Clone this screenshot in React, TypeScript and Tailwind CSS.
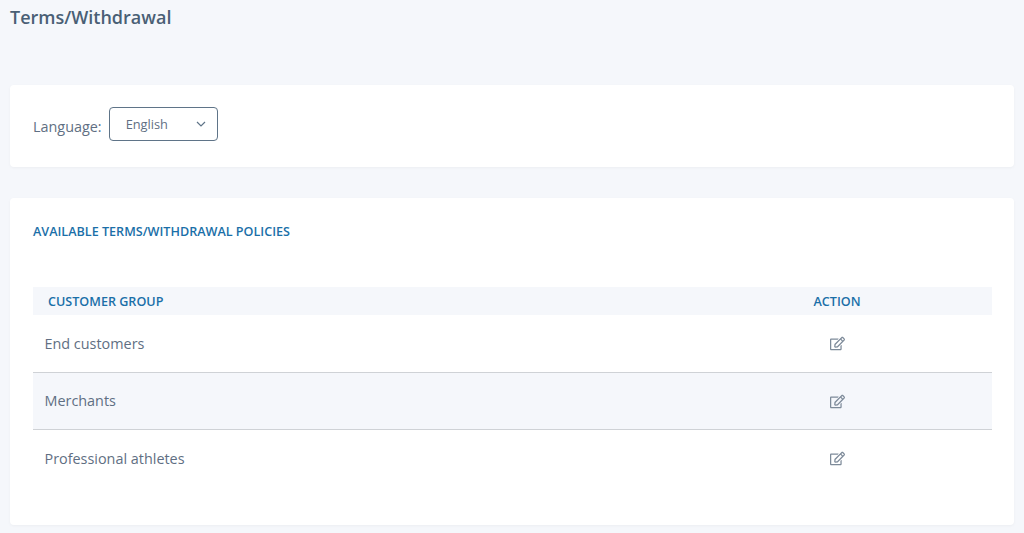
import { FaRegEdit } from "react-icons/fa";

const rows = [
  { name: "End customers", shaded: false },
  { name: "Merchants", shaded: true },
  { name: "Professional athletes", shaded: false },
];

export default function App() {
  return (
    <div className="h-[533px] overflow-hidden bg-[#f5f7fb] px-[10px] font-['Open_Sans','Noto_Sans',sans-serif] text-[#5f6f83]">
      <h1 className="h-[85px] pt-[5px] text-[18px] leading-[24px] font-semibold text-[#4a5f75]">Terms/Withdrawal</h1>

      <section className="flex h-[82px] items-start rounded-[4px] bg-white pl-[23px] pt-[22px] shadow-[0_1px_3px_rgba(0,0,0,0.04)]">
        <span className="mt-[10px] text-[14.4px] leading-[20px]">Language:</span>
        <div className="ml-[7px] flex h-[34px] w-[109px] items-center justify-between rounded-[4px] border border-[#5f7488] pl-[16px] pr-[11px] pt-[2px] text-[12.8px]">
          <span>English</span>
          <svg width="10" height="6" viewBox="0 0 10 6" fill="none" stroke="#5f7488" strokeWidth="1.2" className="mb-[2px]">
            <path d="M1 1l4 4 4-4" />
          </svg>
        </div>
      </section>

      <section className="mt-[31px] h-[327px] rounded-[4px] bg-white px-[23px] pt-[25px] shadow-[0_1px_3px_rgba(0,0,0,0.04)]">
        <h2 className="text-[12.6px] leading-[17px] font-semibold text-[#1a6fa8]">AVAILABLE TERMS/WITHDRAWAL POLICIES</h2>
        <div className="mt-[47px] w-[959px]">
          <div className="flex h-[28px] items-center bg-[#f5f7fb] pt-[2px] text-[12.6px] font-semibold text-[#1a6fa8]">
            <div className="flex-1 pl-[15px]">CUSTOMER GROUP</div>
            <div className="w-[310px] text-center">ACTION</div>
          </div>
          {rows.map((r, i) => (
            <div
              key={r.name}
              className={`flex h-[57.5px] items-center border-b text-[14.4px] ${r.shaded ? "bg-[#f5f7fb]" : "bg-white"} ${i < 2 ? "border-[#cfd2d6]" : "border-transparent"}`}
            >
              <div className="flex-1 pl-[11.5px] pt-[1px]">{r.name}</div>
              <div className="flex w-[310px] justify-center pt-[1px]">
                <FaRegEdit className="text-[15px] text-[#7d8a99]" />
              </div>
            </div>
          ))}
        </div>
      </section>
    </div>
  );
}
